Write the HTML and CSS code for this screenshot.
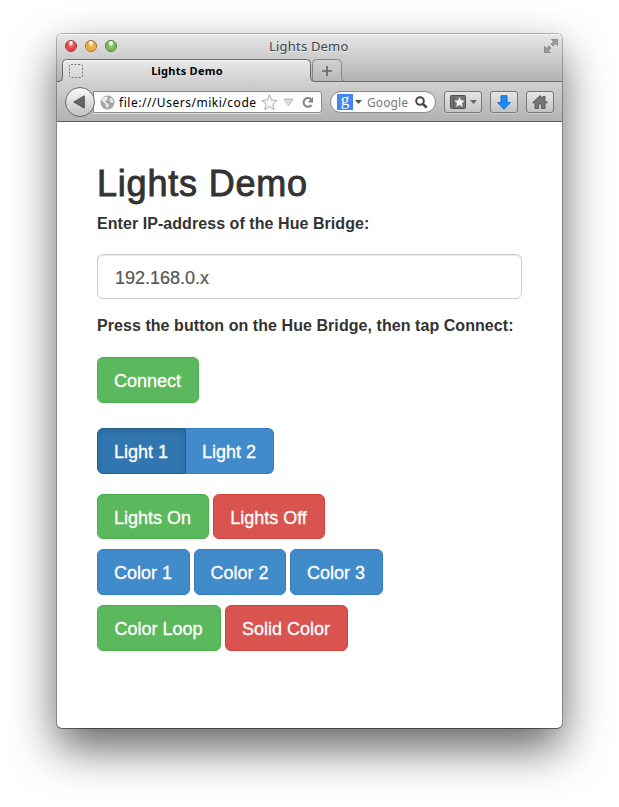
FILE: index.html
```html
<!DOCTYPE html>
<html lang="en">
<head>
<meta charset="utf-8">
<title>Lights Demo</title>
<link rel="stylesheet" href="styles.css">
</head>
<body>
<div class="window">
  <header class="chrome">
    <div class="titlebar">
      <div class="traffic"><i class="light red"></i><i class="light yellow"></i><i class="light green"></i></div>
      <span class="window-title">Lights Demo</span>
      <svg class="fullscreen" width="14" height="14" viewBox="0 0 14 14"><path d="M7.500.5h6v6l-2-2-2.500 2.500-2-2 2.500-2.500zM.5 7.500l2 2L5 7l2 2-2.500 2.500 2 2h-6z" fill="#9a9a9a" stroke="#777" stroke-width=".7"/></svg>
    </div>
    <div class="tabs">
      <svg class="tab-shape" width="505" height="24" viewBox="0 0 505 24">
        <defs><linearGradient id="tab" x1="0" y1="0" x2="0" y2="1"><stop offset="0" stop-color="#e9e9e9"/><stop offset="1" stop-color="#d0d0d0"/></linearGradient>
        <linearGradient id="plus" x1="0" y1="0" x2="0" y2="1"><stop offset="0" stop-color="#d2d2d2"/><stop offset="1" stop-color="#b6b6b6"/></linearGradient></defs>
        <path d="M255.500 22.500V4.500q0-4 4-4h21q4 0 4 4v14q0 4 3 4z" fill="url(#plus)" stroke="#858585"/>
        <path d="M0 24v-1.500h2q3.500 0 3.500-4v-14q0-4 4-4h240q4 0 4 4v14q0 4 4 4V24z" fill="url(#tab)"/>
        <path d="M0 22.500h2q3.500 0 3.500-4v-14q0-4 4-4h240q4 0 4 4v14q0 4 4 4h248" fill="none" stroke="#686868"/>
        <path d="M6.500 6q0-4.500 4-4.500h238" fill="none" stroke="#fff" opacity=".7"/>
      </svg>
      <div class="tab"><svg class="favicon" width="14" height="14" viewBox="0 0 14 14"><rect x=".5" y=".5" width="13" height="13" rx="1.500" fill="none" stroke="#777" stroke-dasharray="2 1.500"/></svg><span>Lights Demo</span></div>
      <svg class="new-tab" width="12" height="12" viewBox="0 0 12 12"><path d="M6 1v10M1 6h10" stroke="#666" stroke-width="1.700"/></svg>
    </div>
    <nav class="toolbar">
      <div class="back"><svg width="12" height="14" viewBox="0 0 12 14"><path d="M.7 7 11.300.8v12.400z" fill="#666" stroke="#444" stroke-width=".8"/></svg></div>
      <div class="url">
        <svg class="globe" width="15" height="15" viewBox="0 0 15 15"><circle cx="7.500" cy="7.500" r="7" fill="#a5a5a5"/><path d="M2 3.500l3-2 3 .5-1 1.500 1 1-2 1-.5 2 2 .5 1.500 2-1.500 3-1.500-1-.5-3-2.500-2-1.500-2zM10 3l2 .2 1.500 3-1 2-2-1-1-2z" fill="#e9e9e9"/></svg>
        <span class="address">file:///Users/miki/code</span>
        <svg class="star" width="17" height="17" viewBox="0 0 17 17"><path d="M8.500 1l2.100 5 5.400.5-4.100 3.600 1.300 5.400-4.700-2.900-4.700 2.900 1.300-5.400L1 6.500 6.400 6z" fill="#fafafa" stroke="#aaa"/></svg>
        <svg class="drop" width="11" height="9" viewBox="0 0 11 9"><path d="M1 1h9L5.500 7.500z" fill="#e0e0e0" stroke="#b4b4b4"/></svg>
        <svg width="13" height="13" viewBox="0 0 13 13"><path d="M9.800 3A4.400 4.400 0 1 0 10.500 9" fill="none" stroke="#858585" stroke-width="2.100"/><path d="M12 .8v5.700H6.500z" fill="#858585"/></svg>
      </div>
      <div class="search">
        <span class="google">g</span>
        <svg class="caret" width="7" height="4" viewBox="0 0 7 4"><path d="M0 0h7L3.500 4z" fill="#555"/></svg>
        <span class="hint">Google</span>
        <svg width="13" height="13" viewBox="0 0 13 13"><circle cx="5" cy="5" r="3.800" fill="none" stroke="#484848" stroke-width="2"/><path d="M8 8l3.700 3.700" stroke="#484848" stroke-width="2.600"/></svg>
      </div>
      <div class="tool bookmarks">
        <svg width="16" height="14" viewBox="0 0 16 14"><rect x=".5" y=".5" width="15" height="13" rx="1" fill="#727272" stroke="#505050"/><path d="M3.500 1v12" stroke="#555"/><path d="M9.500 2l1.500 3.300 3.700.4-2.700 2.500.8 3.800-3.300-2-3.300 2 .8-3.800-2.700-2.500L8 5.300z" fill="#f0f0f0"/></svg>
        <svg width="7" height="4" viewBox="0 0 7 4"><path d="M0 0h7L3.500 4z" fill="#666"/></svg>
      </div>
      <div class="tool"><svg width="14" height="15" viewBox="0 0 14 15"><path d="M4 .7h6v6.800h3.300L7 14.300.7 7.500H4z" fill="#1a8cff" stroke="#1465c0" stroke-width=".9"/></svg></div>
      <div class="tool"><svg width="16" height="14" viewBox="0 0 16 14"><path d="M8 .6l3 2.800V1.500h2v3.900l2.400 2.400H13v5.700H9.500V9h-3v4.500H3V7.800H.6z" fill="#777" stroke="#4e4e4e" stroke-width=".8"/></svg></div>
    </nav>
  </header>
  <main class="page">
    <h1>Lights Demo</h1>
    <label class="label-ip" for="ip">Enter IP-address of the Hue Bridge:</label>
    <input id="ip" type="text" value="192.168.0.x">
    <p class="label-press">Press the button on the Hue Bridge, then tap Connect:</p>
    <div class="row connect"><button class="btn success w-connect">Connect</button></div>
    <div class="row group"><button class="btn primary active">Light 1</button><button class="btn primary last">Light 2</button></div>
    <div class="row power"><button class="btn success w-power">Lights On</button><button class="btn danger w-power">Lights Off</button></div>
    <div class="row colors"><button class="btn primary w-color">Color 1</button><button class="btn primary w-color mid">Color 2</button><button class="btn primary w-color">Color 3</button></div>
    <div class="row"><button class="btn success w-loop">Color Loop</button><button class="btn danger w-solid">Solid Color</button></div>
  </main>
</div>
</body>
</html>
```
FILE: styles.css
```css
* { box-sizing: border-box; }
body { margin: 0; height: 807px; padding: 34px 0 0 57px; background: #fff; overflow: hidden; font-family: "Liberation Sans", Arial, sans-serif; color: #333; }
svg { display: block; flex: none; }
.window { width: 505px; height: 694px; border-radius: 5px; background: #fff; box-shadow: 0 0 0 1px rgba(0,0,0,.26), 0 1px 0 rgba(0,0,0,.3), 0 20px 46px rgba(0,0,0,.62); }
.chrome { height: 88px; border-radius: 5px 5px 0 0; border-top: 1px solid #f5f5f5; border-bottom: 1px solid #5c5c5c; background: linear-gradient(#e6e6e6, #b2b2b2 46px, #d0d0d0 47px, #b2b2b2); font-family: "Noto Sans", sans-serif; }
.titlebar { height: 24px; display: flex; align-items: center; justify-content: space-between; padding: 0 4px 2px 8px; }
.traffic { width: 66px; display: flex; gap: 8px; }
.light { width: 12px; height: 12px; border-radius: 50%; border: 1px solid; }
.red { background: radial-gradient(ellipse at 50% 15%, #fff 0 10%, #f06a6a 35%, #e5383b 60%, #ff9c96); border-color: #9d3535; }
.yellow { background: radial-gradient(ellipse at 50% 15%, #fff 0 10%, #f3b659 35%, #eda538 60%, #ffe88c); border-color: #99702f; }
.green { background: radial-gradient(ellipse at 50% 15%, #fff 0 10%, #99c97a 35%, #70b34e 60%, #cdf3a0); border-color: #4d7a3a; }
.window-title { font-size: 13px; line-height: 18px; letter-spacing: .2px; color: #444; text-shadow: 0 1px 0 rgba(255,255,255,.5); margin-right: auto; margin-left: 138px; white-space: nowrap; }
.tabs { position: relative; height: 23px; display: flex; align-items: center; padding-left: 6px; }
.tab-shape { position: absolute; left: 0; top: 0; }
.tab { position: relative; width: 248px; display: flex; align-items: center; justify-content: center; font-size: 11px; letter-spacing: .25px; font-weight: 700; color: #000; line-height: 16px; padding-top: 1px; }
.favicon { position: absolute; left: 6px; top: 2px; }
.new-tab { position: relative; margin-left: 10px; }
.toolbar { height: 39px; display: flex; align-items: center; padding: 1px 8px 0; }
.back { position: relative; z-index: 1; flex: none; width: 30px; height: 30px; border-radius: 50%; border: 1px solid #686868; background: linear-gradient(#fafafa, #c0c0c0); display: flex; align-items: center; justify-content: center; padding-right: 3px; }
.url { width: 229px; height: 22px; margin-left: -2px; padding: 0 7px 0 6px; border: 1px solid #8c8c8c; border-radius: 0 3px 3px 0; background: linear-gradient(#f4f4f4, #fff 4px); display: flex; align-items: center; box-shadow: 0 1px 0 #ddd; }
.address { width: 138px; margin-left: 4px; font-size: 12px; letter-spacing: .52px; color: #000; white-space: nowrap; overflow: hidden; }
.star { margin-left: 4px; }
.drop { margin: 0 7px 0 5px; }
.search { width: 107px; height: 22px; margin-left: 8px; padding: 0 7px 0 6px; border: 1px solid #8c8c8c; border-radius: 11px; background: linear-gradient(#f4f4f4, #fff 4px); display: flex; align-items: center; }
.google { width: 16px; height: 16px; flex: none; background: #4285f4; color: #fff; font: 400 17px/11px "Liberation Serif", serif; text-align: center; }
.caret { margin-left: 2px; }
.hint { flex: 1; margin-left: 5px; font-size: 12px; letter-spacing: .1px; color: #777; }
.tool { width: 28px; height: 22px; margin-left: 8px; border: 1px solid #777; border-radius: 3px; background: linear-gradient(#e6e6e6, #c4c4c4); display: flex; align-items: center; justify-content: center; box-shadow: 0 1px 0 #ccc; }
.bookmarks { width: 38px; gap: 4px; }
.page { padding: 42px 40px 0; }
h1 { margin: 0; height: 39px; font-size: 36px; line-height: 40px; font-weight: 400; letter-spacing: .8px; -webkit-text-stroke: .9px #333; }
label, .label-press { display: block; margin: 0; height: 23px; font-size: 16px; line-height: 23px; font-weight: 700; letter-spacing: .06px; white-space: nowrap; }
.label-ip { margin-top: 9px; }
input { display: block; width: 425px; height: 45px; margin: 19px 0 15px; padding: 3px 17px 0; border: 1px solid #ccc; border-radius: 6px; box-shadow: inset 0 1px 1px rgba(0,0,0,.075); color: #555; font: 18px/24px "Liberation Sans", Arial, sans-serif; -webkit-text-stroke: .2px #555; }
.row { display: flex; gap: 4px; height: 46px; }
.connect { margin: 20px 0 25px; }
.group { gap: 0; margin-bottom: 20px; }
.power { height: 45px; margin-bottom: 10px; }
.colors { margin-bottom: 10px; }
.btn { height: 100%; padding: 2px 1px 0 0; border: 1px solid; border-radius: 6px; color: #fff; font: 18px/24px "Liberation Sans", Arial, sans-serif; -webkit-text-stroke: .3px #fff; text-align: center; white-space: nowrap; }
.success { background: #5cb85c; border-color: #4cae4c; }
.danger { background: #d9534f; border-color: #d43f3a; }
.primary { background: #428bca; border-color: #357ebd; }
.active { width: 89px; background: #3276b1; border-color: #285e8e; border-radius: 6px 0 0 6px; box-shadow: inset 0 3px 5px rgba(0,0,0,.125); }
.last { width: 88px; border-left: 0; border-radius: 0 6px 6px 0; }
.w-connect { width: 102px; }
.w-power { width: 112px; }
.w-color { width: 93px; }
.mid { width: 92px; }
.w-loop { width: 124px; }
.w-solid { width: 123px; }
```
